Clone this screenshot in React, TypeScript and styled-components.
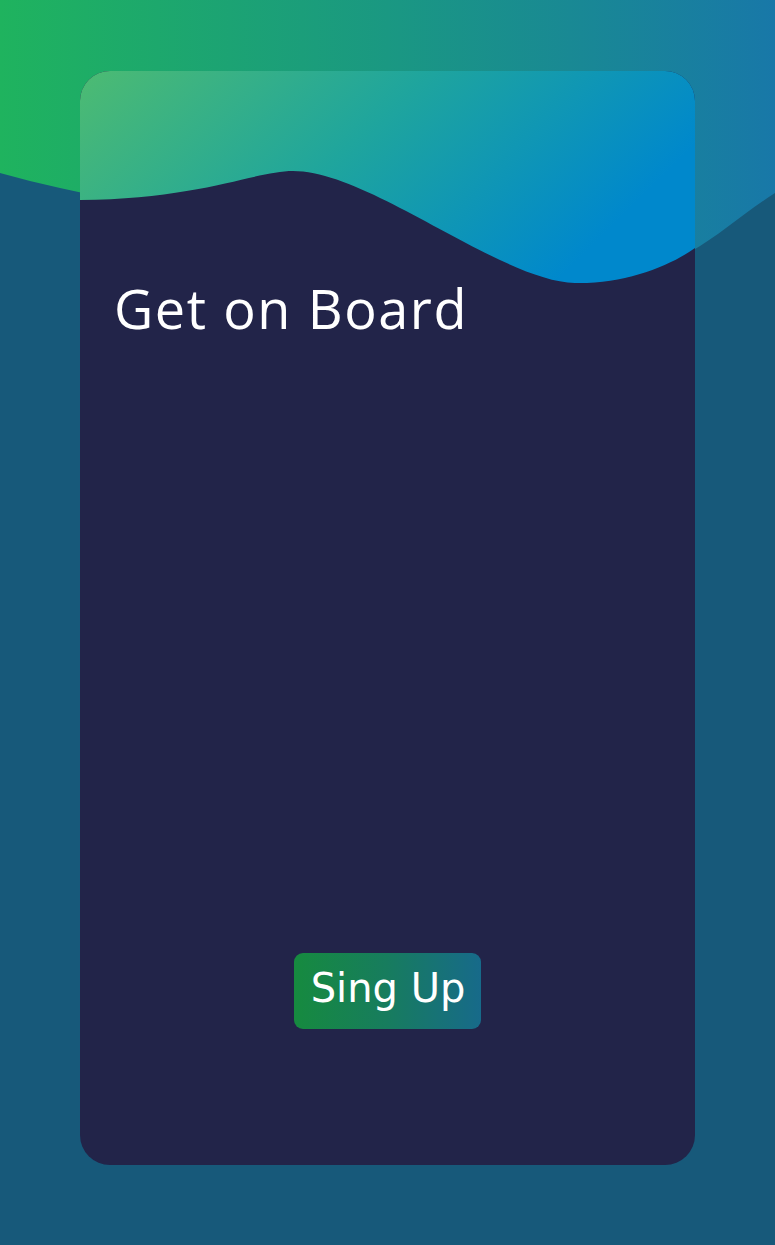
import React from "react";
import styled, { createGlobalStyle } from "styled-components";

const GlobalStyle = createGlobalStyle`
  html, body {
    margin: 0;
    padding: 0;
    background: #17597a;
  }
  * { box-sizing: border-box; }
`;

const Page = styled.div`
  position: relative;
  min-height: 1245px;
  padding: 71px 0 80px;
  background: #17597a;
  overflow: hidden;
`;

const BackdropWave = styled.svg`
  position: absolute;
  top: 0;
  left: 0;
  width: 775px;
  height: 270px;
  display: block;
`;

const Card = styled.section`
  position: relative;
  width: 615px;
  height: 1094px;
  margin: 0 auto;
  border-radius: 30px;
  background: #222449;
  overflow: hidden;
  display: flex;
  flex-direction: column;
`;

const HeaderWave = styled.svg`
  display: block;
  width: 615px;
  height: 214px;
  flex-shrink: 0;
`;

const Title = styled.h1`
  margin: -5px 0 0;
  padding-left: 34px;
  font-family: "Open Sans", "DejaVu Sans", sans-serif;
  font-weight: 400;
  font-size: 54px;
  line-height: 56px;
  letter-spacing: 1.6px;
  color: #ffffff;
`;

const Footer = styled.div`
  margin-top: auto;
  padding-bottom: 136px;
  display: flex;
  justify-content: center;
`;

const SignUpButton = styled.button`
  width: 187px;
  height: 76px;
  margin-left: -1px;
  padding: 0 0 6px 2px;
  border: none;
  border-radius: 9px;
  background: linear-gradient(90deg, #168a3f 0%, #177c5e 50%, #176a8a 100%);
  color: #ffffff;
  font-family: "DejaVu Sans", sans-serif;
  font-size: 40px;
  line-height: 70px;
  cursor: pointer;
`;

export default function App() {
  return (
    <>
      <GlobalStyle />
      <Page>
        <BackdropWave viewBox="0 0 775 270" aria-hidden="true">
          <defs>
            <linearGradient id="bgGrad" x1="0" y1="0" x2="1" y2="0">
              <stop offset="0" stopColor="#1fb35e" />
              <stop offset="0.5" stopColor="#1a9882" />
              <stop offset="1" stopColor="#1878a8" />
            </linearGradient>
          </defs>
          <path
            d="M0,0 H775 V193 C745,212 720,235 690,252 L120,200 C80,193 40,184 0,173 Z"
            fill="url(#bgGrad)"
          />
        </BackdropWave>
        <Card>
          <HeaderWave viewBox="0 0 615 214" aria-hidden="true">
            <defs>
              <linearGradient id="headGrad" x1="0" y1="0" x2="1" y2="0.35">
                <stop offset="0" stopColor="#4dbb72" />
                <stop offset="0.5" stopColor="#1fa59d" />
                <stop offset="1" stopColor="#0088cc" />
              </linearGradient>
            </defs>
            <path
              d="M0,0 H615 V177 C590,195 545,213 495,212 C420,210 290,100 213,100 C175,100 120,128 0,129 Z"
              fill="url(#headGrad)"
            />
          </HeaderWave>
          <Title>Get on Board</Title>
          <Footer>
            <SignUpButton type="button">Sing Up</SignUpButton>
          </Footer>
        </Card>
      </Page>
    </>
  );
}
